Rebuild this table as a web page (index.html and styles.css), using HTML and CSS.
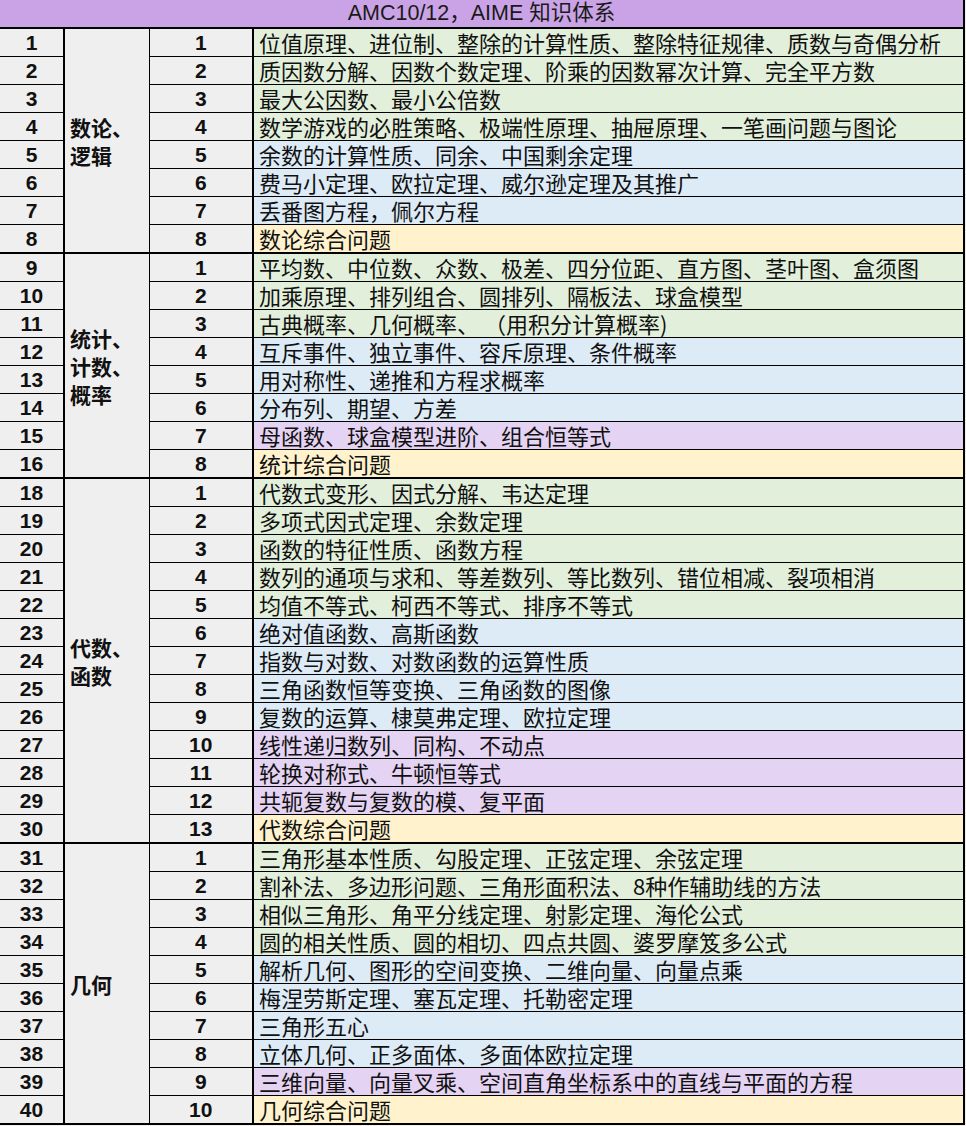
FILE: index.html
```html
<!DOCTYPE html>
<html lang="zh">
<head>
<meta charset="utf-8">
<title>AMC10/12，AIME 知识体系</title>
<link rel="stylesheet" href="styles.css">
</head>
<body>
<table class="kt">
  <colgroup>
    <col class="c-idx"><col class="c-cat"><col class="c-num"><col class="c-desc">
  </colgroup>
  <thead>
    <tr><th colspan="4" class="title">AMC10/12，AIME 知识体系</th></tr>
  </thead>
  <tbody class="grp">
    <tr><td class="idx">1</td><td class="cat" rowspan="8">数论、<br>逻辑</td><td class="num">1</td><td class="desc g">位值原理、进位制、整除的计算性质、整除特征规律、质数与奇偶分析</td></tr>
    <tr><td class="idx">2</td><td class="num">2</td><td class="desc g">质因数分解、因数个数定理、阶乘的因数幂次计算、完全平方数</td></tr>
    <tr><td class="idx">3</td><td class="num">3</td><td class="desc g">最大公因数、最小公倍数</td></tr>
    <tr><td class="idx">4</td><td class="num">4</td><td class="desc g">数学游戏的必胜策略、极端性原理、抽屉原理、一笔画问题与图论</td></tr>
    <tr><td class="idx">5</td><td class="num">5</td><td class="desc b">余数的计算性质、同余、中国剩余定理</td></tr>
    <tr><td class="idx">6</td><td class="num">6</td><td class="desc b">费马小定理、欧拉定理、威尔逊定理及其推广</td></tr>
    <tr><td class="idx">7</td><td class="num">7</td><td class="desc b">丢番图方程，佩尔方程</td></tr>
    <tr><td class="idx">8</td><td class="num">8</td><td class="desc y">数论综合问题</td></tr>
  </tbody>
  <tbody class="grp">
    <tr><td class="idx">9</td><td class="cat" rowspan="8">统计、<br>计数、<br>概率</td><td class="num">1</td><td class="desc g">平均数、中位数、众数、极差、四分位距、直方图、茎叶图、盒须图</td></tr>
    <tr><td class="idx">10</td><td class="num">2</td><td class="desc g">加乘原理、排列组合、圆排列、隔板法、球盒模型</td></tr>
    <tr><td class="idx">11</td><td class="num">3</td><td class="desc g">古典概率、几何概率、 （用积分计算概率)</td></tr>
    <tr><td class="idx">12</td><td class="num">4</td><td class="desc b">互斥事件、独立事件、容斥原理、条件概率</td></tr>
    <tr><td class="idx">13</td><td class="num">5</td><td class="desc b">用对称性、递推和方程求概率</td></tr>
    <tr><td class="idx">14</td><td class="num">6</td><td class="desc b">分布列、期望、方差</td></tr>
    <tr><td class="idx">15</td><td class="num">7</td><td class="desc p">母函数、球盒模型进阶、组合恒等式</td></tr>
    <tr><td class="idx">16</td><td class="num">8</td><td class="desc y">统计综合问题</td></tr>
  </tbody>
  <tbody class="grp">
    <tr><td class="idx">18</td><td class="cat" rowspan="13">代数、<br>函数</td><td class="num">1</td><td class="desc g">代数式变形、因式分解、韦达定理</td></tr>
    <tr><td class="idx">19</td><td class="num">2</td><td class="desc g">多项式因式定理、余数定理</td></tr>
    <tr><td class="idx">20</td><td class="num">3</td><td class="desc g">函数的特征性质、函数方程</td></tr>
    <tr><td class="idx">21</td><td class="num">4</td><td class="desc g">数列的通项与求和、等差数列、等比数列、错位相减、裂项相消</td></tr>
    <tr><td class="idx">22</td><td class="num">5</td><td class="desc g">均值不等式、柯西不等式、排序不等式</td></tr>
    <tr><td class="idx">23</td><td class="num">6</td><td class="desc b">绝对值函数、高斯函数</td></tr>
    <tr><td class="idx">24</td><td class="num">7</td><td class="desc b">指数与对数、对数函数的运算性质</td></tr>
    <tr><td class="idx">25</td><td class="num">8</td><td class="desc b">三角函数恒等变换、三角函数的图像</td></tr>
    <tr><td class="idx">26</td><td class="num">9</td><td class="desc b">复数的运算、棣莫弗定理、欧拉定理</td></tr>
    <tr><td class="idx">27</td><td class="num">10</td><td class="desc p">线性递归数列、同构、不动点</td></tr>
    <tr><td class="idx">28</td><td class="num">11</td><td class="desc p">轮换对称式、牛顿恒等式</td></tr>
    <tr><td class="idx">29</td><td class="num">12</td><td class="desc p">共轭复数与复数的模、复平面</td></tr>
    <tr><td class="idx">30</td><td class="num">13</td><td class="desc y">代数综合问题</td></tr>
  </tbody>
  <tbody class="grp">
    <tr><td class="idx">31</td><td class="cat" rowspan="10">几何</td><td class="num">1</td><td class="desc g">三角形基本性质、勾股定理、正弦定理、余弦定理</td></tr>
    <tr><td class="idx">32</td><td class="num">2</td><td class="desc g">割补法、多边形问题、三角形面积法、8种作辅助线的方法</td></tr>
    <tr><td class="idx">33</td><td class="num">3</td><td class="desc g">相似三角形、角平分线定理、射影定理、海伦公式</td></tr>
    <tr><td class="idx">34</td><td class="num">4</td><td class="desc g">圆的相关性质、圆的相切、四点共圆、婆罗摩笈多公式</td></tr>
    <tr><td class="idx">35</td><td class="num">5</td><td class="desc b">解析几何、图形的空间变换、二维向量、向量点乘</td></tr>
    <tr><td class="idx">36</td><td class="num">6</td><td class="desc b">梅涅劳斯定理、塞瓦定理、托勒密定理</td></tr>
    <tr><td class="idx">37</td><td class="num">7</td><td class="desc b">三角形五心</td></tr>
    <tr><td class="idx">38</td><td class="num">8</td><td class="desc b">立体几何、正多面体、多面体欧拉定理</td></tr>
    <tr><td class="idx">39</td><td class="num">9</td><td class="desc p">三维向量、向量叉乘、空间直角坐标系中的直线与平面的方程</td></tr>
    <tr><td class="idx">40</td><td class="num">10</td><td class="desc y">几何综合问题</td></tr>
  </tbody>
</table>
</body>
</html>
```

FILE: styles.css
```css
html, body {
  margin: 0;
  padding: 0;
  background: #efefef;
}

.kt {
  width: 965px;
  border-collapse: collapse;
  table-layout: fixed;
  font-family: "Liberation Sans", "Noto Sans CJK SC", sans-serif;
  color: #111;
  background: #efefef;
  border-right: 2px solid #000;
  border-bottom: 2px solid #000;
}

.c-idx { width: 64px; }
.c-cat { width: 85px; }
.c-num { width: 104px; }
.c-desc { width: auto; }

.title {
  height: 27px;
  padding: 0;
  background: #c9a3e5;
  font-weight: 400;
  font-size: 21.5px;
  line-height: 27px;
  text-align: center;
  color: #1a1a1a;
  border-bottom: 2px solid #000;
}

.grp {
  border-bottom: 2px solid #000;
}

.kt td {
  height: 27px;
  padding: 0;
  line-height: 27px;
  white-space: nowrap;
}

.idx {
  text-align: center;
  font-weight: 700;
  font-size: 21px;
  border-bottom: 1px solid #000;
  border-right: 2px solid #000;
}

.cat {
  vertical-align: middle;
  padding-left: 5px !important;
  font-family: "Noto Sans CJK SC", sans-serif;
  font-weight: 700;
  font-size: 21px;
  line-height: 28px !important;
  border-right: 1px solid #000;
}

.num {
  text-align: center;
  font-weight: 700;
  font-size: 21px;
  border-bottom: 1px solid #000;
  border-right: 2px solid #000;
}

.desc {
  padding-left: 5px !important;
  font-family: "Noto Sans CJK SC", sans-serif;
  font-size: 22px;
  border-bottom: 1px solid #000;
}

.g { background: #e2efda; }
.b { background: #ddebf7; }
.p { background: #e5d3f3; }
.y { background: #fff2cc; }
```
